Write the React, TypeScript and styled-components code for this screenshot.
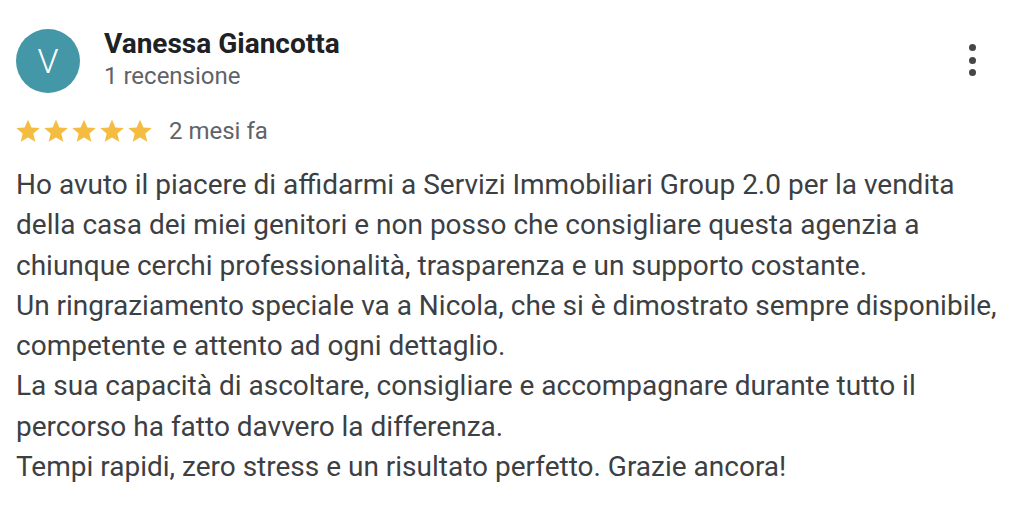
import React from "react";
import styled, { createGlobalStyle } from "styled-components";

const Global = createGlobalStyle`
  html, body {
    margin: 0;
    padding: 0;
    background: #fff;
  }
  body {
    font-family: Roboto, "Liberation Sans", Arial, sans-serif;
  }
`;

const Card = styled.div`
  width: 1012px;
  height: 520px;
  box-sizing: border-box;
  padding: 29px 0 0 16px;
  background: #fff;
`;

const Header = styled.div`
  display: flex;
  align-items: flex-start;
`;

const Avatar = styled.div`
  width: 64px;
  height: 64px;
  border-radius: 50%;
  background: #4397a6;
  color: #fff;
  display: flex;
  align-items: center;
  justify-content: center;
  font-size: 34px;
  font-weight: 300;
  flex-shrink: 0;
`;

const Who = styled.div`
  margin-left: 24px;
  display: flex;
  flex-direction: column;
  flex: 1;
`;

const Name = styled.div`
  font-size: 28px;
  font-weight: 700;
  color: #202124;
  line-height: 30px;
`;

const Sub = styled.div`
  font-size: 24px;
  color: #5f6368;
  line-height: 30px;
  margin-top: 2px;
`;

const MenuBtn = styled.button`
  border: 0;
  background: none;
  padding: 0;
  margin: 15px 36px 0 0;
  display: flex;
  flex-direction: column;
  gap: 5.5px;
  cursor: pointer;
`;

const Dot = styled.span`
  width: 7px;
  height: 7px;
  border-radius: 50%;
  background: #444746;
`;

const Meta = styled.div`
  display: flex;
  align-items: center;
  margin-top: 24px;
`;

const Stars = styled.div`
  display: flex;
  gap: 4px;
`;

const When = styled.span`
  margin-left: 17px;
  font-size: 24px;
  color: #5f6368;
`;

const Body = styled.p`
  margin: 20px 0 0;
  font-size: 28px;
  line-height: 40.3px;
  color: #3c4043;
  white-space: pre;
`;

const Star = () => (
  <svg width="24" height="24" viewBox="1 1 22 22">
    <path
      fill="#f5bc42"
      d="M12 1.6l3.1 7.1 7.7.6-5.9 5 1.8 7.6L12 17.9l-6.7 4 1.8-7.6-5.9-5 7.7-.6z"
    />
  </svg>
);

const text = `Ho avuto il piacere di affidarmi a Servizi Immobiliari Group 2.0 per la vendita
della casa dei miei genitori e non posso che consigliare questa agenzia a
chiunque cerchi professionalità, trasparenza e un supporto costante.
Un ringraziamento speciale va a Nicola, che si è dimostrato sempre disponibile,
competente e attento ad ogni dettaglio.
La sua capacità di ascoltare, consigliare e accompagnare durante tutto il
percorso ha fatto davvero la differenza.
Tempi rapidi, zero stress e un risultato perfetto. Grazie ancora!`;

export default function App() {
  return (
    <>
      <Global />
      <Card>
        <Header>
          <Avatar>V</Avatar>
          <Who>
            <Name>Vanessa Giancotta</Name>
            <Sub>1 recensione</Sub>
          </Who>
          <MenuBtn aria-label="Altro">
            <Dot />
            <Dot />
            <Dot />
          </MenuBtn>
        </Header>
        <Meta>
          <Stars>
            {[0, 1, 2, 3, 4].map((i) => (
              <Star key={i} />
            ))}
          </Stars>
          <When>2 mesi fa</When>
        </Meta>
        <Body>{text}</Body>
      </Card>
    </>
  );
}
